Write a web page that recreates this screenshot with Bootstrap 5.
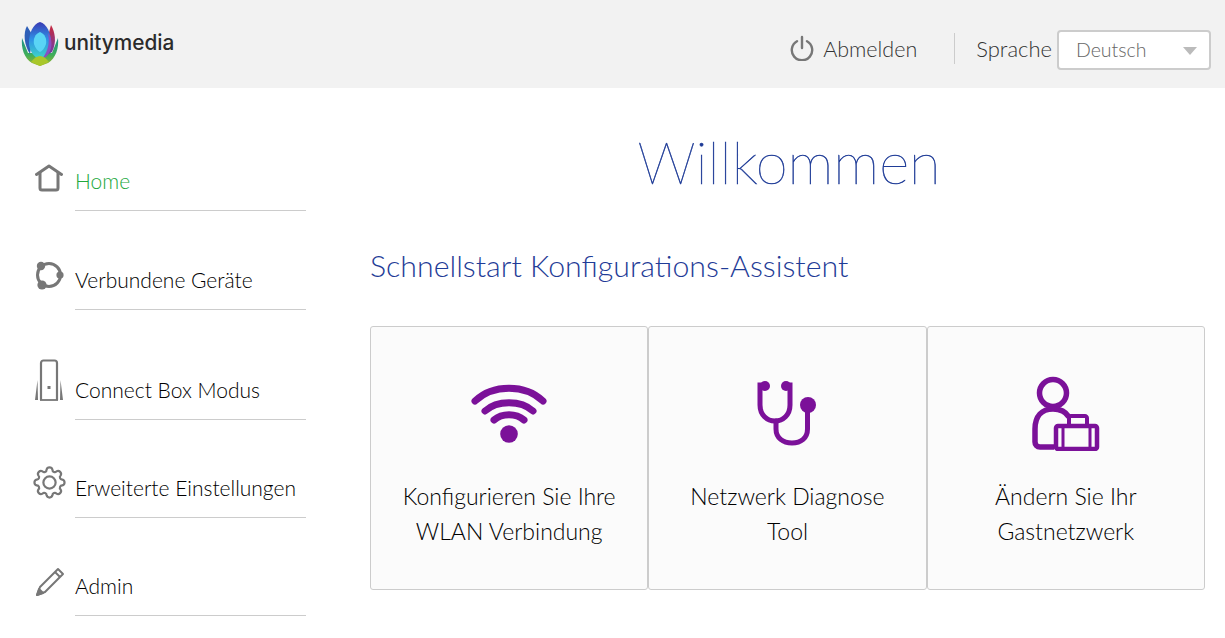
<!DOCTYPE html>
<html lang="de">
<head>
  <meta charset="UTF-8">
  <meta name="viewport" content="width=device-width, initial-scale=1.0">
  <title>Connect Box</title>
  <link href="https://cdn.jsdelivr.net/npm/bootstrap@5.3.2/dist/css/bootstrap.min.css" rel="stylesheet">
  <style>
    body {
      font-family: Lato, "Open Sans", sans-serif;
      font-weight: 300;
      color: #000;
      background-color: #fff;
      overflow: hidden;
    }

    .top-bar {
      height: 88px;
      background-color: #f2f2f2;
      padding: 0 14px 0 21px;
    }

    .logo-word {
      font-family: Inter, sans-serif;
      font-size: 20.8px;
      font-weight: 500;
      color: #2b2b2b;
      margin: -2px 0 0 5px;
    }

    .top-right {
      font-size: 22px;
      color: #333;
      padding-top: 12px;
    }

    .power-icon {
      margin-bottom: 4px;
    }

    .logout-text {
      font-size: 21.5px;
      margin-bottom: 2px;
    }

    .lang-label {
      margin-bottom: 3px;
    }

    .top-sep {
      width: 1px;
      height: 31px;
      background-color: #ccc;
      margin: 0 21px 4px 37px;
    }

    .lang-wrap {
      width: 154px;
      margin-left: 5px;
    }

    .lang-wrap::after {
      content: "";
      position: absolute;
      top: 17px;
      right: 14px;
      border-left: 7px solid transparent;
      border-right: 7px solid transparent;
      border-top: 8px solid #bbb;
      pointer-events: none;
    }

    .lang-select {
      height: 40px;
      padding: 0 0 0 17px;
      font-size: 19.5px;
      font-weight: 300;
      color: #666;
      border: 2px solid #ccc;
      border-radius: 4px;
      background-image: none;
    }

    .side-col {
      width: 306px;
      padding: 78px 0 0 33px;
      flex-shrink: 0;
    }

    .side-entry {
      margin-bottom: 53px;
      font-size: 21px;
    }

    .side-entry:first-child {
      margin-bottom: 54px;
    }

    .side-entry.entry-tall {
      margin-top: 65px;
    }

    .side-icon {
      width: 42px;
      flex-shrink: 0;
    }

    .side-icon svg {
      display: block;
    }

    .home-icon { margin: -2px 0 0 2px; }
    .devices-icon { margin: -5px 0 0 1px; }
    .box-icon { margin: -16px 0 0 0; }
    .gear-icon { margin: -8px 0 0 -1px; }
    .pen-icon { margin: -4px 0 0 2px; }

    .side-label {
      flex-grow: 1;
      height: 45px;
      line-height: 30px;
      border-bottom: 1px solid #ccc;
      color: #000;
      white-space: nowrap;
    }

    .side-label.is-active {
      color: #22a83c;
    }

    .main-col {
      padding: 0 20px 0 64px;
      flex-grow: 1;
    }

    .welcome {
      font-size: 58px;
      font-weight: 100;
      line-height: 72px;
      color: #1f3c97;
      -webkit-text-stroke: 0.5px #1f3c97;
      text-align: center;
      margin: 38px 0 0;
      padding-left: 3px;
    }

    .quick-title {
      font-size: 30.3px;
      font-weight: 300;
      line-height: 40px;
      color: #1f3c97;
      margin: 47px 0 41px;
    }

    .quick-tile {
      flex: 1 1 0;
      height: 264px;
      background-color: #fbfbfb;
      border: 1px solid #ccc;
      border-radius: 3px;
      text-align: center;
      font-size: 23px;
      line-height: 35px;
      color: #000;
      padding-top: 44px;
    }

    .tile-icon {
      height: 80px;
      margin-bottom: 28px;
    }
  </style>
</head>
<body>

  <header class="top-bar d-flex justify-content-between align-items-center">
    <div class="d-flex align-items-center">
      <svg width="38" height="46" viewBox="0 0 38 46">
        <defs>
          <filter id="logoSoft"><feGaussianBlur stdDeviation="0.5"/></filter>
          <linearGradient id="petalBlue" x1="0" y1="0" x2="0" y2="1">
            <stop offset="0" stop-color="#3a3ab4"/>
            <stop offset="0.45" stop-color="#2e8fe6"/>
            <stop offset="1" stop-color="#3fdcc4"/>
          </linearGradient>
          <linearGradient id="petalRed" x1="0" y1="0" x2="0" y2="1">
            <stop offset="0" stop-color="#c8283c"/>
            <stop offset="1" stop-color="#6a3fb0"/>
          </linearGradient>
          <linearGradient id="petalGreen" x1="0" y1="0" x2="0" y2="1">
            <stop offset="0" stop-color="#1f8f8a"/>
            <stop offset="0.6" stop-color="#3fae5a"/>
            <stop offset="1" stop-color="#9fb52a"/>
          </linearGradient>
        </defs>
        <g filter="url(#logoSoft)">
          <path d="M1 17C0 27 3 37 11 42L19 45L27 42C35 37 38 27 37 17L31 32H7Z" fill="url(#petalGreen)"/>
          <path d="M6 5C2 12 3 24 9 33L12 15Z" fill="#2d5fb8"/>
          <path d="M30 4C34 11 36 21 31 31L26 34L27 15Z" fill="url(#petalRed)"/>
          <path d="M19 1C26 3 30 12 30 22C30 30 25 36 19 39C13 36 8 30 8 22C8 12 12 3 19 1Z" fill="url(#petalBlue)"/>
          <path d="M27 12C32 18 32 29 25 36L21 38C27 30 29 22 27 12Z" fill="#8a4fc0"/>
          <path d="M19 11C24 13 26 18 25 23C24 27 21 30 19 31C17 30 14 27 13 23C12 18 14 13 19 11Z" fill="#5ad4f5"/>
          <path d="M10 41C13 37 16 35 19 35C22 35 25 37 28 41L19 45Z" fill="#a9c72c"/>
        </g>
      </svg>
      <span class="logo-word">unitymedia</span>
    </div>
    <div class="top-right d-flex align-items-center">
      <svg class="power-icon me-2" width="26" height="26" viewBox="0 0 26 26" fill="none" stroke="#777" stroke-width="2.4" stroke-linecap="round">
        <path d="M8 6.2A10.2 10.2 0 1 0 18 6.2"/>
        <path d="M13 2V13"/>
      </svg>
      <span class="logout-text">Abmelden</span>
      <div class="top-sep"></div>
      <span class="lang-label">Sprache</span>
      <div class="lang-wrap position-relative">
        <select class="form-select lang-select">
          <option>Deutsch</option>
        </select>
      </div>
    </div>
  </header>

  <div class="d-flex">
    <nav class="side-col">
      <div class="side-entry d-flex">
        <div class="side-icon">
          <svg class="home-icon" width="28" height="28" viewBox="0 0 28 28" fill="none" stroke="#777" stroke-width="3" stroke-linejoin="round" stroke-linecap="round">
            <path d="M1.5 10.5L14 2L26.5 10.5"/>
            <path d="M5 9V24C5 25.5 6 26 7 26H21C22 26 23 25.5 23 24V9"/>
          </svg>
        </div>
        <div class="side-label is-active">Home</div>
      </div>
      <div class="side-entry d-flex">
        <div class="side-icon">
          <svg class="devices-icon" width="30" height="30" viewBox="0 0 30 30" fill="none" stroke="#777" stroke-width="3">
            <circle cx="15" cy="15" r="11.5"/>
            <circle cx="7" cy="6" r="4.2" fill="#777" stroke="none"/>
            <circle cx="26" cy="15" r="3.6" fill="#777" stroke="none"/>
            <circle cx="8" cy="25" r="4.6" fill="#777" stroke="none"/>
          </svg>
        </div>
        <div class="side-label">Verbundene Geräte</div>
      </div>
      <div class="side-entry entry-tall d-flex">
        <div class="side-icon">
          <svg class="box-icon" width="31" height="43" viewBox="0 0 31 43" fill="none" stroke="#777" stroke-width="2.2">
            <path d="M8 41V4C8 2.5 9 1.5 10.5 1.5H21.5C23 1.5 24 2.5 24 4V41"/>
            <path d="M7 41H25" stroke-width="1.8"/>
            <rect x="14.5" y="27" width="3" height="3" fill="#777" stroke="none"/>
            <path d="M4.5 21L2 41H5Z" fill="#777" stroke="none"/>
            <path d="M27.5 21L30 41H27Z" fill="#777" stroke="none"/>
          </svg>
        </div>
        <div class="side-label">Connect Box Modus</div>
      </div>
      <div class="side-entry d-flex">
        <div class="side-icon">
          <svg class="gear-icon" width="35" height="35" viewBox="0 0 32 32" fill="none" stroke="#777" stroke-width="2" stroke-linejoin="round">
            <circle cx="16" cy="16" r="5.6"/>
            <path d="M27.69 13.3A2.8 2.8 0 0 1 27.69 18.7A2.1 2.1 0 0 0 26.18 22.36A2.8 2.8 0 0 1 22.36 26.18A2.1 2.1 0 0 0 18.7 27.69A2.8 2.8 0 0 1 13.3 27.69A2.1 2.1 0 0 0 9.64 26.18A2.8 2.8 0 0 1 5.82 22.36A2.1 2.1 0 0 0 4.31 18.7A2.8 2.8 0 0 1 4.31 13.3A2.1 2.1 0 0 0 5.82 9.64A2.8 2.8 0 0 1 9.64 5.82A2.1 2.1 0 0 0 13.3 4.31A2.8 2.8 0 0 1 18.7 4.31A2.1 2.1 0 0 0 22.36 5.82A2.8 2.8 0 0 1 26.18 9.64A2.1 2.1 0 0 0 27.69 13.3Z"/>
          </svg>
        </div>
        <div class="side-label">Erweiterte Einstellungen</div>
      </div>
      <div class="side-entry d-flex">
        <div class="side-icon">
          <svg class="pen-icon" width="30" height="30" viewBox="0 0 30 30" fill="none" stroke="#777" stroke-width="2" stroke-linejoin="round">
            <path d="M23 2L28 7L10 25L2 28L5 20Z"/>
            <path d="M20 5L25 10"/>
            <path d="M2 28L4 22L8 26Z" fill="#777"/>
          </svg>
        </div>
        <div class="side-label">Admin</div>
      </div>
    </nav>

    <main class="main-col">
      <h1 class="welcome">Willkommen</h1>
      <h2 class="quick-title">Schnellstart Konfigurations-Assistent</h2>
      <div class="d-flex">
        <div class="quick-tile">
          <div class="tile-icon">
            <svg width="80" height="80" viewBox="0 0 80 80" fill="none" stroke="#7b1199" stroke-width="7" stroke-linecap="round">
              <path d="M6 30C24 13 56 13 74 30"/>
              <path d="M16 40C28 29 52 29 64 40"/>
              <path d="M25 49C33 42 47 42 55 49"/>
              <circle cx="40" cy="63" r="8.8" fill="#7b1199" stroke="none"/>
            </svg>
          </div>
          <div>Konfigurieren Sie Ihre<br>WLAN Verbindung</div>
        </div>
        <div class="quick-tile">
          <div class="tile-icon">
            <svg width="80" height="80" viewBox="0 0 80 80" fill="none" stroke="#7b1199" stroke-width="5" stroke-linecap="round">
              <path d="M18 14H13V34C13 44 20 50 28 50C36 50 43 44 43 34V14H39"/>
              <path d="M29 50V58C29 67 36 72 45 72C54 72 60.5 67 60.5 58V38"/>
              <circle cx="18" cy="15" r="5" fill="#7b1199" stroke="none"/>
              <circle cx="39" cy="15" r="5" fill="#7b1199" stroke="none"/>
              <circle cx="61" cy="34" r="8" fill="#7b1199" stroke="none"/>
            </svg>
          </div>
          <div>Netzwerk Diagnose<br>Tool</div>
        </div>
        <div class="quick-tile">
          <div class="tile-icon">
            <svg width="80" height="80" viewBox="0 0 80 80" fill="none" stroke="#7b1199" stroke-width="5.5">
              <circle cx="27" cy="22" r="13.5"/>
              <path d="M28 76H14C11 76 9 74 9 71V58C9 45 16 38 27 38C35 38 40 41 43 46"/>
              <rect x="30" y="55" width="41" height="23" rx="2" stroke-width="4.5"/>
              <path d="M37 55V78M64 55V78" stroke-width="3"/>
              <path d="M43 53V47C43 46 44 45 45 45H59C60 45 61 46 61 47V53" stroke-width="4"/>
            </svg>
          </div>
          <div>Ändern Sie Ihr<br>Gastnetzwerk</div>
        </div>
      </div>
    </main>
  </div>

  <script src="https://cdn.jsdelivr.net/npm/bootstrap@5.3.2/dist/js/bootstrap.bundle.min.js"></script>
</body>
</html>
